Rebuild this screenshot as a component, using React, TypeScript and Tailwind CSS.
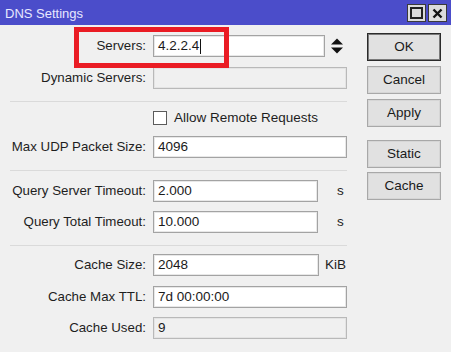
import React from "react";

const font = { fontFamily: '"Liberation Sans", Arial, sans-serif' };

function Label({ children }: { children: React.ReactNode }) {
  return (
    <div className="w-[136px] shrink-0 flex justify-end whitespace-nowrap leading-none text-[13.3px] text-[#1e1e1e]">
      {children}
    </div>
  );
}

function Field({
  label,
  value,
  width,
  disabled,
  unit,
  unitClass,
  caret,
  className,
}: {
  label: string;
  value?: string;
  width: string;
  disabled?: boolean;
  unit?: string;
  unitClass?: string;
  caret?: boolean;
  className?: string;
}) {
  return (
    <div className={"flex items-center " + (className || "")}>
      <Label>{label}</Label>
      <div
        className={
          "ml-[7px] h-[22px] flex items-center pl-[4px] text-[13.5px] text-[#1a1a1a] border " +
          (disabled
            ? "bg-[#f0f0f0] border-[#b9b9b9] shadow-[inset_0_0_0_1px_#e4e4e4] "
            : "bg-white border-[#a3a3a3] shadow-[inset_0_0_0_1px_#e8e8e8] ") +
          width
        }
      >
        <span className="leading-none">{value}</span>
        {caret && <span className="ml-[1px] w-px h-[15px] bg-[#111]" />}
      </div>
      {unit && <span className={"text-[13.5px] text-[#1e1e1e] leading-none " + (unitClass || "")}>{unit}</span>}
    </div>
  );
}

function Sep({ className }: { className?: string }) {
  return <div className={"h-px w-[337px] bg-[#dadada] " + (className || "")} />;
}

function Btn({ children, primary, className }: { children: React.ReactNode; primary?: boolean; className?: string }) {
  return (
    <div
      className={
        "h-[28px] w-[74px] flex items-center justify-center bg-[#e1e1e1] text-[13.5px] text-[#1a1a1a] border " +
        (primary ? "border-[#2b2b2b] shadow-[inset_0_0_0_1px_#7a7a7a]" : "border-[#a8a8a8] shadow-[inset_0_0_0_1px_#d6d6d6]") +
        " " +
        (className || "")
      }
    >
      {children}
    </div>
  );
}

export default function App() {
  return (
    <div className="relative w-[451px] h-[352px] bg-[#f0f0f0] overflow-hidden" style={font}>
      {/* Title bar */}
      <div className="h-[25px] bg-[#4b4dca] flex items-center justify-between pl-[5px] pr-[4px]">
        <span className="text-[13px] text-[#e8e8ff] leading-none mt-[1px]">DNS Settings</span>
        <div className="flex gap-[2px] mt-[1px]">
          <div className="w-[19px] h-[18px] bg-[#dcdcdc] border border-[#3a3a3a] flex items-center justify-center">
            <svg width="13" height="12" viewBox="0 0 13 12">
              <rect x="1" y="1" width="11" height="10" fill="none" stroke="#222" strokeWidth="2" />
            </svg>
          </div>
          <div className="w-[19px] h-[18px] bg-[#dcdcdc] border border-[#3a3a3a] flex items-center justify-center">
            <svg width="11" height="11" viewBox="0 0 11 11">
              <path d="M1.5 1.5 L9.5 9.5 M9.5 1.5 L1.5 9.5" stroke="#111" strokeWidth="2.4" />
            </svg>
          </div>
        </div>
      </div>

      <div className="flex">
        {/* left column */}
        <div className="ml-[10px] w-[337px] flex flex-col">
          <div className="flex items-center mt-[10px]">
            <Field label="Servers:" value="4.2.2.4" width="w-[172px]" caret />
            <svg className="ml-[6px]" width="12" height="16" viewBox="0 0 12 16">
              <path d="M0 6.5 L6 0.5 L12 6.5 Z" fill="#111" />
              <path d="M0 9.5 L12 9.5 L6 15.5 Z" fill="#111" />
            </svg>
          </div>
          <Field label="Dynamic Servers:" width="w-[194px]" disabled className="mt-[10px]" />
          <Sep className="mt-[12px]" />
          <div className="flex items-center mt-[9px] ml-[143px]">
            <div className="w-[14px] h-[14px] bg-white border border-[#5a5a5a]" />
            <span className="ml-[7px] text-[13.5px] text-[#1e1e1e] leading-none">Allow Remote Requests</span>
          </div>
          <Field label="Max UDP Packet Size:" value="4096" width="w-[194px]" className="mt-[11px]" />
          <Sep className="mt-[12px]" />
          <Field label="Query Server Timeout:" value="2.000" width="w-[165px]" unit="s" unitClass="ml-[19px]" className="mt-[9px]" />
          <Field label="Query Total Timeout:" value="10.000" width="w-[165px]" unit="s" unitClass="ml-[19px]" className="mt-[9px]" />
          <Sep className="mt-[12px]" />
          <Field label="Cache Size:" value="2048" width="w-[166px]" unit="KiB" unitClass="ml-[6px]" className="mt-[8px]" />
          <Field label="Cache Max TTL:" value="7d 00:00:00" width="w-[194px]" className="mt-[10px]" />
          <Field label="Cache Used:" value="9" width="w-[194px]" disabled className="mt-[9px]" />
        </div>

        {/* right column */}
        <div className="ml-[20px] flex flex-col">
          <Btn primary className="mt-[8px]">OK</Btn>
          <Btn className="mt-[5px]">Cancel</Btn>
          <Btn className="mt-[5px]">Apply</Btn>
          <Btn className="mt-[13px]">Static</Btn>
          <Btn className="mt-[4px]">Cache</Btn>
        </div>
      </div>

      {/* red annotation box */}
      <div className="absolute left-[74px] top-[27px] w-[155px] h-[41px] border-[5px] border-[#ea1c24]" />
    </div>
  );
}
